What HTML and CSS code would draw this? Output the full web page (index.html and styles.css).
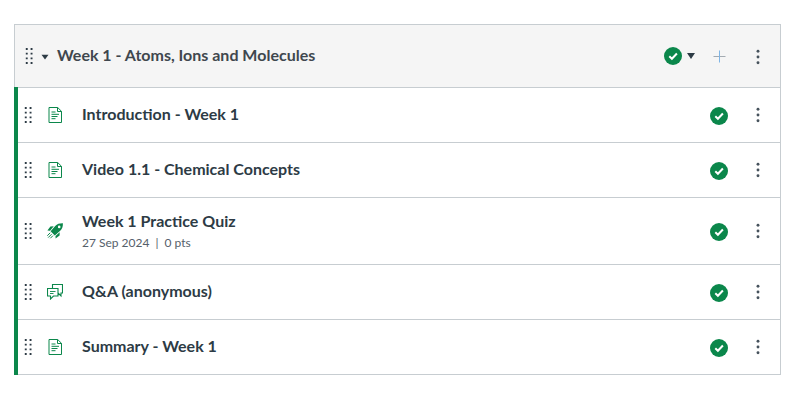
FILE: index.html
```html
<!DOCTYPE html>
<html lang="en">
<head>
    <meta charset="UTF-8">
    <meta name="viewport" content="width=device-width, initial-scale=1.0">
    <title>Modules</title>
    <link rel="stylesheet" href="styles.css">
</head>
<body>
    <!-- Shared icons -->
    <svg class="sprite" width="0" height="0">
        <symbol id="drag" viewBox="0 0 8 16">
            <path d="M.8 0h1.900v1.900H.8zM5.600 0h1.900v1.900H5.600zM.8 4.700h1.900v1.900H.8zM5.600 4.700h1.900v1.900H5.600zM.8 9.400h1.900v1.900H.8zM5.600 9.400h1.900v1.900H5.600zM.8 14.100h1.900V16H.8zM5.600 14.100h1.900V16H5.600z"/>
        </symbol>
        <symbol id="page" viewBox="0 0 16 16">
            <path d="M2 .5h8.700l3.800 3.800v11.200H2zM10.500.5v4h4" fill="none" stroke="currentColor"/>
            <path d="M4.500 5h4M4.500 7.300h7.500M4.500 9.500h6M4.500 11.700h4" fill="none" stroke="currentColor"/>
        </symbol>
        <symbol id="rocket" viewBox="0 0 16 16">
            <path fill-rule="evenodd" d="M15.900.2C12.800.1 10.300.8 8.200 2.900L3.600 8.300l4.200 4.200 5.400-4.700c2.100-2.100 2.800-4.500 2.700-7.600zM12.200 2.600a1.300 1.300 0 1 1 0 2.600 1.300 1.300 0 0 1 0-2.600z"/>
            <path d="M6.700 3.300L3.400 3.400.4 7.600l2.700.1zM12.700 9.300l-.1 3.300-4 3-.1-2.700z"/>
            <path d="M3.200 9.800L.3 12.700M4.600 11.200L1.200 14.600M6 12.600L3.300 15.300" fill="none" stroke="currentColor"/>
        </symbol>
        <symbol id="discussion" viewBox="0 0 16 16">
            <path d="M5.500 4.500v-4h10V9H14v3l-3-3M.5 4.500H11V12H6.500l-3 3v-3h-3z" fill="none" stroke="currentColor" stroke-width="1.1"/>
            <path d="M3 7.500h5.500M3 9.500h3.500" fill="none" stroke="currentColor" stroke-width=".9"/>
        </symbol>
        <symbol id="check" viewBox="0 0 18 18">
            <circle cx="9" cy="9" r="9"/>
            <path d="M5.300 9.300l2.600 2.500 5-5.300" fill="none" stroke="#fff" stroke-width="2"/>
        </symbol>
        <symbol id="more" viewBox="0 0 4 16">
            <circle cx="2" cy="2.300" r="1.450"/>
            <circle cx="2" cy="8" r="1.450"/>
            <circle cx="2" cy="13.700" r="1.450"/>
        </symbol>
    </svg>

    <div class="module">
        <div class="module-header">
            <svg class="drag"><use href="#drag"/></svg>
            <svg class="toggle" viewBox="0 0 8 6"><path d="M.5.700h7L4 5.500z"/></svg>
            <h2 class="module-title">Week 1 - Atoms, Ions and Molecules</h2>
            <svg class="check"><use href="#check"/></svg>
            <svg class="caret" viewBox="0 0 8 6"><path d="M0 0h8L4 6z"/></svg>
            <svg class="add" viewBox="0 0 13 13"><path d="M.5 6.500h12" stroke="#a3abb2"/><path d="M6.500.5v12" stroke="#7fb5e6"/></svg>
            <svg class="more"><use href="#more"/></svg>
        </div>
        <ul class="items">
            <li class="item">
                <svg class="drag"><use href="#drag"/></svg>
                <svg class="type"><use href="#page"/></svg>
                <div class="info"><a class="title">Introduction - Week 1</a></div>
                <svg class="check"><use href="#check"/></svg>
                <svg class="more"><use href="#more"/></svg>
            </li>
            <li class="item">
                <svg class="drag"><use href="#drag"/></svg>
                <svg class="type"><use href="#page"/></svg>
                <div class="info"><a class="title">Video 1.1 - Chemical Concepts</a></div>
                <svg class="check"><use href="#check"/></svg>
                <svg class="more"><use href="#more"/></svg>
            </li>
            <li class="item quiz">
                <svg class="drag"><use href="#drag"/></svg>
                <svg class="type"><use href="#rocket"/></svg>
                <div class="info">
                    <a class="title">Week 1 Practice Quiz</a>
                    <div class="details"><span>27 Sep 2024</span><span class="divider">|</span><span>0 pts</span></div>
                </div>
                <svg class="check"><use href="#check"/></svg>
                <svg class="more"><use href="#more"/></svg>
            </li>
            <li class="item">
                <svg class="drag"><use href="#drag"/></svg>
                <svg class="type"><use href="#discussion"/></svg>
                <div class="info"><a class="title">Q&amp;A (anonymous)</a></div>
                <svg class="check"><use href="#check"/></svg>
                <svg class="more"><use href="#more"/></svg>
            </li>
            <li class="item">
                <svg class="drag"><use href="#drag"/></svg>
                <svg class="type"><use href="#page"/></svg>
                <div class="info"><a class="title">Summary - Week 1</a></div>
                <svg class="check"><use href="#check"/></svg>
                <svg class="more"><use href="#more"/></svg>
            </li>
        </ul>
    </div>
</body>
</html>
```
FILE: styles.css
```css
* {
    margin: 0;
    padding: 0;
    box-sizing: border-box;
}

body {
    font-family: Lato, "Liberation Sans", sans-serif;
    font-size: 16px;
    color: #2d3b45;
    background-color: #fff;
    padding: 24px 12px 0 14px;
}

svg {
    display: block;
    flex: none;
    fill: currentColor;
}

.sprite {
    position: absolute;
}

.module {
    border-top: 1px solid #c7cdd1;
    border-right: 1px solid #c7cdd1;
}

.module-header {
    display: flex;
    align-items: center;
    height: 62px;
    padding: 0 20px 0 10px;
    background-color: #f5f5f5;
    border-left: 1px solid #c7cdd1;
}

.module-title {
    flex: 1;
    margin: 0 0 2px 8px;
    font-size: 16px;
    font-weight: 700;
    line-height: 24px;
    color: #3f474e;
}

.drag {
    width: 8px;
    height: 16px;
}

.toggle {
    width: 8px;
    height: 6px;
    margin: 2px 0 0 8px;
}

.caret {
    width: 8px;
    height: 6px;
    margin-left: 5px;
}

.add {
    width: 13px;
    height: 13px;
    margin: 3px 1px 2px 18px;
    stroke-width: 1;
}

.check {
    width: 18px;
    height: 18px;
    color: #0b874b;
}

.more {
    width: 4px;
    height: 16px;
    margin-left: 28px;
    color: #46525c;
}

.module-header .more {
    margin: 2px 0 0 29px;
}

.items {
    list-style: none;
    border-left: 4px solid #0b874b;
}

.item {
    display: flex;
    align-items: center;
    height: 55px;
    padding: 1px 20px 0 6px;
    border-top: 1px solid #c7cdd1;
}

.item:last-child {
    height: 56px;
    border-bottom: 1px solid #c7cdd1;
}

.item .drag,
.item .type,
.item .more {
    margin-bottom: 2px;
}

.quiz {
    height: 67px;
}

.type {
    width: 16px;
    height: 16px;
    margin-left: 15px;
    color: #0b874b;
}

.info {
    flex: 1;
    margin: 0 0 4px 19px;
}

.title {
    display: block;
    font-weight: 700;
    line-height: 24px;
}

.details {
    padding-top: 1px;
    margin-bottom: -1px;
    font-size: 12px;
    line-height: 18px;
    color: #55606a;
}

.divider {
    margin: 0 6px;
}
```
